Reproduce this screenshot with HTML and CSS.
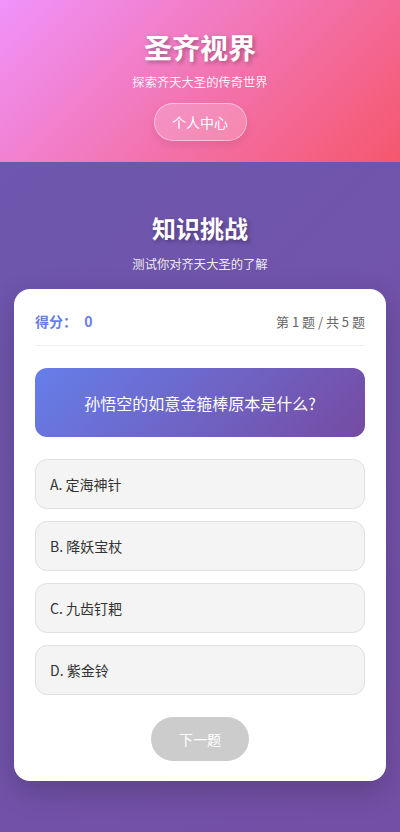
FILE: index.html
```html
<!DOCTYPE html>
<html lang="zh">
<head>
<meta charset="utf-8">
<link rel="stylesheet" href="styles.css">
</head>
<body>
<header class="hero">
  <h1 class="hero-title">圣齐视界</h1>
  <p class="hero-sub">探索齐天大圣的传奇世界</p>
  <button class="hero-btn">个人中心</button>
</header>
<section class="quiz">
  <h2 class="quiz-title">知识挑战</h2>
  <p class="quiz-sub">测试你对齐天大圣的了解</p>
  <div class="card">
    <div class="card-head">
      <div class="score">得分： <span class="score-num">0</span></div>
      <div class="progress">第 1 题 / 共 5 题</div>
    </div>
    <div class="question">孙悟空的如意金箍棒原本是什么?</div>
    <div class="options">
      <div class="option">A. 定海神针</div>
      <div class="option">B. 降妖宝杖</div>
      <div class="option">C. 九齿钉耙</div>
      <div class="option">D. 紫金铃</div>
    </div>
    <div class="next-wrap"><button class="next-btn">下一题</button></div>
  </div>
</section>
</body>
</html>
```

FILE: styles.css
```css
* { box-sizing: border-box; }
html, body { margin: 0; padding: 0; }
body {
  font-family: "Noto Sans CJK SC", "Noto Sans", sans-serif;
  background: linear-gradient(135deg, #6d58b0 0%, #744fa5 100%);
  min-height: 832px;
}
.hero {
  height: 162px;
  background: linear-gradient(135deg, #f093fb 0%, #f5576c 100%);
  display: flex;
  flex-direction: column;
  align-items: center;
  padding-top: 27px;
  color: #fff;
}
.hero-title {
  margin: 0;
  font-size: 28px;
  line-height: 40px;
  font-weight: 700;
  text-shadow: 2px 2px 4px rgba(0,0,0,0.3);
}
.hero-sub {
  margin: 6px 0 0;
  font-size: 12.3px;
  line-height: 18px;
  color: rgba(255,255,255,0.92);
}
.hero-btn {
  margin-top: 12px;
  height: 38px;
  width: 93px;
  border-radius: 19px;
  border: 1px solid rgba(255,255,255,0.45);
  background: rgba(255,255,255,0.2);
  color: #fff;
  font-family: inherit;
  font-size: 14px;
  box-shadow: 0 4px 10px rgba(0,0,0,0.08);
}
.quiz {
  padding: 0 14px 52px;
  display: flex;
  flex-direction: column;
  align-items: stretch;
}
.quiz-title {
  margin: 47px 0 0;
  text-align: center;
  color: #fff;
  font-size: 24px;
  line-height: 38px;
  font-weight: 700;
  text-shadow: 2px 2px 4px rgba(0,0,0,0.3);
}
.quiz-sub {
  margin: 8px 0 0;
  text-align: center;
  color: rgba(255,255,255,0.9);
  font-size: 12.3px;
  line-height: 18px;
}
.card {
  margin-top: 16px;
  background: #fff;
  border-radius: 16px;
  padding: 20px 21px 20px;
  box-shadow: 0 10px 30px rgba(0,0,0,0.2);
}
.card-head {
  display: flex;
  justify-content: space-between;
  align-items: center;
  height: 37px;
  padding-bottom: 12px;
  border-bottom: 1px solid #eee;
}
.score {
  color: #667eea;
  font-weight: 700;
  font-size: 14px;
}
.score-num { margin-left: 4px; }
.progress {
  color: #666;
  font-size: 13px;
}
.question {
  margin-top: 22px;
  height: 69px;
  border-radius: 12px;
  background: linear-gradient(135deg, #667eea 0%, #764ba2 100%);
  color: #fff;
  font-size: 16px;
  display: flex;
  align-items: center;
  justify-content: center;
}
.options {
  margin-top: 22px;
  display: flex;
  flex-direction: column;
  gap: 12px;
}
.option {
  height: 50px;
  background: #f4f4f4;
  border: 1px solid #e0e0e0;
  border-radius: 12px;
  padding-left: 14px;
  display: flex;
  align-items: center;
  color: #333;
  font-size: 14px;
}
.next-wrap {
  margin-top: 22px;
  display: flex;
  justify-content: center;
}
.next-btn {
  width: 98px;
  height: 44px;
  border-radius: 22px;
  border: none;
  background: #ccc;
  color: #fff;
  font-family: inherit;
  font-size: 14px;
}
```
